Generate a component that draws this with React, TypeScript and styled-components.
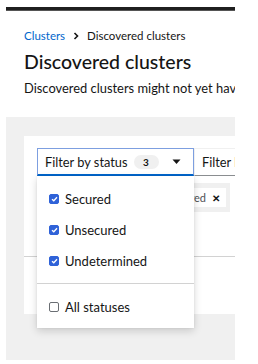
import React from 'react'
import styled, { createGlobalStyle } from 'styled-components'

const colors = {
  text: '#151515',
  link: '#0066cc',
  blue: '#0066cc',
  grayBg: '#f0f0f0',
  border: '#d2d2d2',
  check: '#2f62d8',
}

const GlobalStyle = createGlobalStyle`
  body {
    margin: 0;
    background: #fff;
    font-family: 'Lato', 'Liberation Sans', sans-serif;
    color: ${colors.text};
  }
`

const Frame = styled.div`
  width: 229px;
  margin-left: 6px;
  padding-top: 7px;
  overflow: hidden;
`

const TopBar = styled.div`
  height: 3px;
  background: #1f1f1f;
  border-bottom: 1px solid #555;
`

const Header = styled.header`
  padding: 16px 0 0 18px;
  white-space: nowrap;
`

const Breadcrumb = styled.nav`
  display: flex;
  align-items: center;
  gap: 8px;
  font-size: 11.5px;
  line-height: 18px;
  a {
    color: ${colors.link};
    text-decoration: none;
  }
`

const Title = styled.h1`
  margin: 4px 0 0;
  font-size: 19.5px;
  font-weight: 500;
  line-height: 26px;
`

const Description = styled.p`
  margin: 3px 0 0;
  font-size: 12.9px;
  line-height: 20px;
`

const GrayArea = styled.section`
  margin-top: 19px;
  height: 243px;
  background: ${colors.grayBg};
  padding: 19px 0 0 18px;
  box-sizing: border-box;
`

const Card = styled.div`
  position: relative;
  background: #fff;
  height: 178px;
  padding: 12px 0 0 13px;
  box-sizing: border-box;
  white-space: nowrap;
`

const Toolbar = styled.div`
  display: flex;
`

const Toggle = styled.div<{ $open?: boolean }>`
  display: flex;
  align-items: center;
  box-sizing: border-box;
  height: 28px;
  width: ${p => (p.$open ? '157px' : '120px')};
  flex-shrink: 0;
  padding: 0 0 0 7px;
  font-size: 12.8px;
  border: 1px solid ${p => (p.$open ? '#7d9fe0' : colors.grayBg)};
  border-bottom: ${p => (p.$open ? `2px solid ${colors.blue}` : '1px solid #8a8d90')};
`

const Badge = styled.span`
  margin-left: 6px;
  background: ${colors.grayBg};
  border-radius: 8px;
  width: 25px;
  height: 14px;
  font-size: 10px;
  font-weight: 700;
  line-height: 14px;
  text-align: center;
`

const Caret = styled.svg`
  margin-left: 13px;
`

const ChipRow = styled.div`
  display: flex;
  gap: 5px;
  margin-top: 7px;
  height: 29px;
`

const ChipGroup = styled.div<{ $width?: number }>`
  display: flex;
  align-items: center;
  justify-content: flex-end;
  gap: 4px;
  flex-shrink: 0;
  width: ${p => (p.$width ? `${p.$width}px` : 'auto')};
  box-sizing: border-box;
  overflow: hidden;
  background: ${colors.grayBg};
  padding: 0 4px;
  font-size: 11px;
`

const Chip = styled.span`
  display: flex;
  align-items: center;
  gap: 6px;
  background: #fff;
  height: 19px;
  padding: 0 6px;
  color: #4f5255;
  b {
    font-size: 10px;
    color: #151515;
  }
`

const TableHead = styled.div`
  margin-top: 44px;
  margin-left: -13px;
  border-top: 1px solid ${colors.border};
`

const Menu = styled.ul`
  position: absolute;
  top: 40px;
  left: 13px;
  width: 157px;
  margin: 0;
  padding: 7px 0 6px;
  list-style: none;
  background: #fff;
  box-shadow: 0 3px 8px rgba(3, 3, 3, 0.16), 0 0 2px rgba(3, 3, 3, 0.08);
  z-index: 2;
`

const MenuItem = styled.li`
  display: flex;
  align-items: center;
  gap: 6px;
  height: 31px;
  padding-left: 12px;
  font-size: 13px;
`

const Divider = styled.li`
  height: 1px;
  margin: 7px 0;
  background: ${colors.border};
`

const Box = styled.span<{ $checked?: boolean }>`
  display: inline-flex;
  align-items: center;
  justify-content: center;
  box-sizing: border-box;
  width: 10px;
  height: 10px;
  border-radius: 2px;
  background: ${p => (p.$checked ? colors.check : '#fff')};
  border: 1px solid ${p => (p.$checked ? colors.check : '#6a6e73')};
`

function Check({ checked }: { checked?: boolean }) {
  return (
    <Box $checked={checked}>
      {checked && (
        <svg width="7" height="6" viewBox="0 0 7 6">
          <path d="M1 3.2 L2.8 4.8 L6 1.2" stroke="#fff" strokeWidth="1.3" fill="none" />
        </svg>
      )}
    </Box>
  )
}

const statuses = [
  { label: 'Secured', checked: true },
  { label: 'Unsecured', checked: true },
  { label: 'Undetermined', checked: true },
]

export default function App() {
  return (
    <>
      <GlobalStyle />
      <Frame>
        <TopBar />
        <Header>
          <Breadcrumb>
            <a href="#">Clusters</a>
            <svg width="6" height="8" viewBox="0 0 6 8">
              <path d="M1.5 1 L4.5 4 L1.5 7" stroke="#151515" strokeWidth="1.6" fill="none" />
            </svg>
            <span>Discovered clusters</span>
          </Breadcrumb>
          <Title>Discovered clusters</Title>
          <Description>Discovered clusters might not yet have been imported</Description>
        </Header>
        <GrayArea>
          <Card>
            <Toolbar>
              <Toggle $open>
                Filter by status
                <Badge>3</Badge>
                <Caret width="9" height="6" viewBox="0 0 9 6">
                  <path d="M0.5 0.5 H8.5 L4.5 5 Z" fill="#151515" />
                </Caret>
              </Toggle>
              <Toggle>Filter by name</Toggle>
            </Toolbar>
            <ChipRow>
              <ChipGroup $width={193}>
                <Chip>
                  Unsecured
                  <b>✕</b>
                </Chip>
                <Chip>
                  Secured
                  <b>✕</b>
                </Chip>
              </ChipGroup>
              <ChipGroup>
                <Chip>Name</Chip>
              </ChipGroup>
            </ChipRow>
            <TableHead />
            <Menu>
              {statuses.map(s => (
                <MenuItem key={s.label}>
                  <Check checked={s.checked} />
                  {s.label}
                </MenuItem>
              ))}
              <Divider />
              <MenuItem>
                <Check />
                All statuses
              </MenuItem>
            </Menu>
          </Card>
        </GrayArea>
      </Frame>
    </>
  )
}
